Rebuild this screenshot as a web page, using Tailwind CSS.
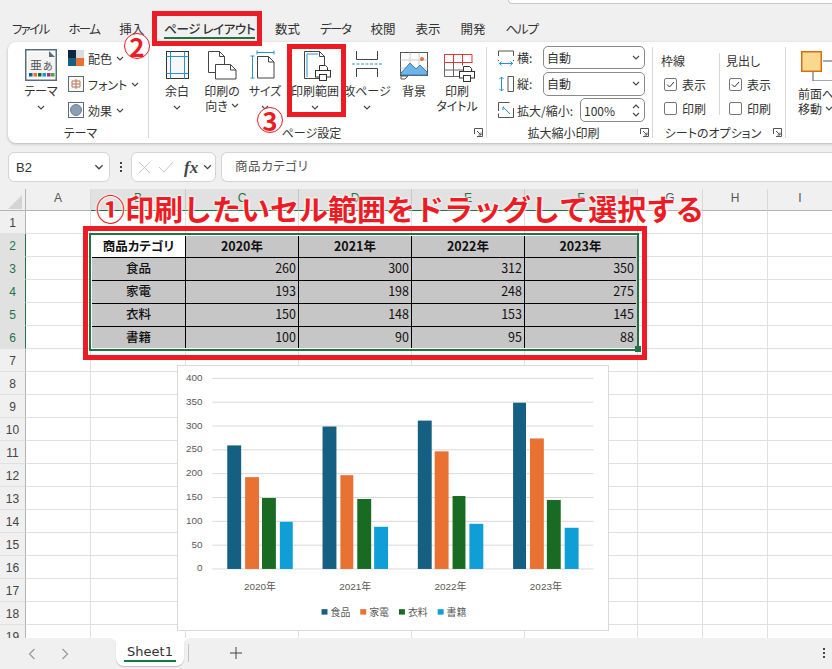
<!DOCTYPE html>
<html lang="ja">
<head>
<meta charset="UTF-8" />
<title>Excel 印刷範囲</title>
<script src="https://cdn.jsdelivr.net/npm/@tailwindcss/browser@4"></script>
</head>
<body class="bg-[#f0f0f0]">
<svg class="hidden">
  <symbol id="chev" viewBox="0 0 8 5"><path d="M1 1l3 3 3-3" fill="none" stroke="#444" stroke-width="1.1"/></symbol>
  <symbol id="launch" viewBox="0 0 9 9"><path d="M.5 6V.5H8.5V8.5H3M3 3l4 4M7 4.5V7H4.5" fill="none" stroke="#555"/></symbol>
  <symbol id="printer" viewBox="0 0 16 16"><path d="M4.5.5h6l2 2v4h-8z" fill="#fff" stroke="#333"/><rect x=".5" y="5.5" width="15" height="6.5" fill="#fff" stroke="#333"/><rect x="4.5" y="9.5" width="7" height="6" fill="#fff" stroke="#333"/></symbol>
</svg>

<div class="relative w-[832px] h-[669px] overflow-hidden flex flex-col bg-[#f0f0f0] text-[#333] text-[12px] leading-[15px] font-['Noto_Sans_CJK_JP','Liberation_Sans',sans-serif] [font-feature-settings:'palt']">

  <!-- title bar edge -->
  <div class="h-[4px] flex justify-end shrink-0"><div class="w-[324px] h-[4px] bg-white border-b border-l border-[#c8c8c8] rounded-bl"></div></div>

  <!-- tabs -->
  <div class="h-[38px] shrink-0 pt-[11px] pl-[12px] flex items-center gap-[20px] text-[12.5px]">
    <span class="tracking-[-1.7px]">ファイル</span>
    <span class="tracking-[-1.7px]">ホーム</span>
    <span>挿入</span>
    <span class="relative font-medium tracking-[-0.4px]">ページ レイアウト<span class="absolute left-0 right-0 top-[16px] h-[2px] bg-[#217346]"></span></span>
    <span>数式</span>
    <span class="tracking-[-1.5px]">データ</span>
    <span>校閲</span>
    <span>表示</span>
    <span>開発</span>
    <span class="tracking-[-1.2px]">ヘルプ</span>
  </div>

  <!-- ribbon -->
  <div class="h-[101px] shrink-0 ml-[8px] -mr-[10px] bg-white rounded-lg shadow-[0_1px_3px_rgba(0,0,0,0.25)] flex py-[5px]">

    <!-- theme group -->
    <div class="w-[141px] flex flex-col border-r border-[#d8d8d8]">
      <div class="flex-1 flex pl-[8px]">
        <div class="w-[50px] flex flex-col items-center pt-[2px]">
          <svg class="w-[32px] h-[32px]" viewBox="0 0 32 32">
            <rect x=".75" y=".75" width="30.5" height="30.5" fill="#fff" stroke="#5b6b7c" stroke-width="1.5"/>
            <path d="M3 3h22l5 5v21H3z" fill="#f4f4f4"/>
            <path d="M24 2l6 6h-6z" fill="#5b6b7c"/>
            <text x="5" y="21" font-size="12" fill="#555">亜</text>
            <text x="18" y="21" font-size="10" fill="#555">あ</text>
            <rect x="4" y="24" width="3.5" height="3.5" fill="#156082"/><rect x="8.5" y="24" width="3.5" height="3.5" fill="#e97132"/><rect x="13" y="24" width="3.5" height="3.5" fill="#196b24"/><rect x="17.5" y="24" width="3.5" height="3.5" fill="#0f9ed5"/><rect x="22" y="24" width="3.5" height="3.5" fill="#a02b93"/><rect x="26" y="24" width="3.5" height="3.5" fill="#4ea72e"/>
          </svg>
          <span class="mt-[2px]">テーマ</span>
          <svg class="w-[8px] h-[5px] mt-[7px]"><use href="#chev"/></svg>
        </div>
        <div class="ml-[2px] flex flex-col gap-[4px]">
          <div class="h-[22px] flex items-center gap-[4px]">
            <svg class="w-[16px] h-[16px]" viewBox="0 0 16 16"><rect width="8" height="8" fill="#0e2841"/><rect x="8" width="8" height="8" fill="#d9dde2"/><rect y="8" width="8" height="8" fill="#156082"/><rect x="8" y="8" width="8" height="8" fill="#e97132"/></svg>
            <span>配色</span><svg class="w-[8px] h-[5px]"><use href="#chev"/></svg>
          </div>
          <div class="h-[22px] flex items-center gap-[4px]">
            <svg class="w-[16px] h-[16px]" viewBox="0 0 16 16"><rect x=".5" y=".5" width="15" height="15" fill="#fdfaf6" stroke="#5b6b7c"/><path d="M4 5h8v6H4zM8 3v10M4 8h8" fill="none" stroke="#b5725a"/></svg>
            <span>フォント</span><svg class="w-[8px] h-[5px]"><use href="#chev"/></svg>
          </div>
          <div class="h-[22px] flex items-center gap-[4px]">
            <svg class="w-[16px] h-[16px]" viewBox="0 0 16 16"><rect x=".5" y=".5" width="15" height="15" fill="#fff" stroke="#5b6b7c"/><circle cx="8" cy="8" r="5.5" fill="#8a9fb3" stroke="#6d8196"/></svg>
            <span>効果</span><svg class="w-[8px] h-[5px]"><use href="#chev"/></svg>
          </div>
        </div>
      </div>
      <div class="h-[15px] -mb-[2px] pl-[5px] text-center">テーマ</div>
    </div>

    <!-- page setup group -->
    <div class="w-[338px] flex flex-col border-r border-[#d8d8d8]">
      <div class="flex-1 flex pl-[8px] pt-[2px] text-center">
        <div class="w-[40px] flex flex-col items-center">
          <svg class="w-[32px] h-[32px]" viewBox="0 0 32 32"><rect x="5.5" y="2.5" width="22" height="27" fill="#f7f7f7" stroke="#333"/><path d="M9.5 2.5v27M23.5 2.5v27M5.5 7.5h22M5.5 24.5h22" stroke="#2b8fd6" fill="none"/></svg>
          <span class="mt-[2px]">余白</span>
          <svg class="w-[8px] h-[5px] mt-[7px]"><use href="#chev"/></svg>
        </div>
        <div class="w-[50px] flex flex-col items-center">
          <svg class="w-[32px] h-[32px]" viewBox="0 0 32 32"><path d="M2.5 2.5h11l5 5v16h-16z" fill="#fff" stroke="#444"/><path d="M13.5 2.5v5h5" fill="none" stroke="#444"/><path d="M9.5 15.5h15l5.5 5.5v9H9.5z" fill="#fff" stroke="#444"/><path d="M24.5 15.5V21H30" fill="none" stroke="#444"/></svg>
          <span class="mt-[2px]">印刷の</span>
          <span class="flex items-center gap-[3px]">向き<svg class="w-[8px] h-[5px]"><use href="#chev"/></svg></span>
        </div>
        <div class="w-[36px] flex flex-col items-center">
          <svg class="w-[32px] h-[32px]" viewBox="0 0 32 32"><path d="M8.5 7.5h11l5.5 5.5v16H8.5z" fill="#fff" stroke="#444"/><path d="M19.5 7.5V13H25" fill="none" stroke="#444"/><path d="M8 3.5h17M8 1.5v4M25 1.5v4M3.5 7v22M1.5 7h4M1.5 29h4" fill="none" stroke="#2b8fd6"/></svg>
          <span class="mt-[2px]">サイズ</span>
          <svg class="w-[8px] h-[5px] mt-[7px]"><use href="#chev"/></svg>
        </div>
        <div class="w-[64px] flex flex-col items-center">
          <svg class="w-[32px] h-[32px] overflow-visible" viewBox="0 0 32 32"><path d="M5.5 2.5h15l5 5v22h-20z" fill="#fff" stroke="#444"/><path d="M20.5 2.5v5h5" fill="none" stroke="#444"/><path d="M8 28V5h11" fill="none" stroke="#2b8fd6"/><svg x="16" y="16" width="16" height="16"><use href="#printer"/></svg></svg>
          <span class="mt-[2px]">印刷範囲</span>
          <svg class="w-[8px] h-[5px] mt-[7px]"><use href="#chev"/></svg>
        </div>
        <div class="w-[40px] flex flex-col items-center">
          <svg class="w-[32px] h-[32px]" viewBox="0 0 32 32"><path d="M5.5 2v8.5h21V2M5.5 28v-8.5h21V28" fill="none" stroke="#444"/><path d="M1 15h30" stroke="#2b8fd6" stroke-dasharray="3 1.5"/></svg>
          <span class="mt-[2px] whitespace-nowrap">改ページ</span>
          <svg class="w-[8px] h-[5px] mt-[7px]"><use href="#chev"/></svg>
        </div>
        <div class="w-[54px] flex flex-col items-center">
          <svg class="w-[32px] h-[32px]" viewBox="0 0 32 32"><rect x="2.5" y="3.5" width="27" height="23" fill="#fff" stroke="#555"/><path d="M12 3.5v23M21 3.5v23M2.5 11h27M2.5 19h27" stroke="#ccc"/><path d="M3 24l9-10 6 6 4-4 7 7v3H3z" fill="#6fb4e6" stroke="#3a82bb"/><circle cx="24" cy="10" r="2" fill="#e97132"/><path d="M3 27h7l-3 3H3z" fill="#fff" stroke="#555"/></svg>
          <span class="mt-[2px]">背景</span>
        </div>
        <div class="w-[32px] flex flex-col items-center">
          <svg class="w-[32px] h-[32px] overflow-visible" viewBox="0 0 32 32"><path d="M3.5 13.5h28M3.5 21h28M3.5 5v22.5h15M12.5 13.5v14M21.5 13.5v3" fill="none" stroke="#666"/><path d="M3.5 5.5h27.5v8H3.5zM12.5 5.5v8M21.5 5.5v8" fill="#fff" stroke="#e8343b"/><svg x="18" y="17" width="16" height="16"><use href="#printer"/></svg></svg>
          <span class="mt-[2px]">印刷</span>
          <span class="whitespace-nowrap">タイトル</span>
        </div>
      </div>
      <div class="h-[15px] -mb-[2px] flex items-center"><span class="flex-1 text-center">ページ設定</span><svg class="w-[9px] h-[9px] mr-[3px]"><use href="#launch"/></svg></div>
    </div>

    <!-- scale group -->
    <div class="w-[166px] flex flex-col border-r border-[#d8d8d8]">
      <div class="flex-1 pl-[11px] -mt-[1px] flex flex-col gap-[3px]">
        <div class="h-[23px] flex items-center">
          <svg class="w-[16px] h-[16px] mr-[3px]" viewBox="0 0 16 16"><path d="M.5 6V1h15v5M.5 10v1M15.5 10v1" fill="none" stroke="#555"/><path d="M1 13.5h14M3.5 11.5l-2 2 2 2M12.5 11.5l2 2-2 2" fill="none" stroke="#2b8fd6"/></svg>
          <span class="w-[26px]">横:</span>
          <div class="w-[102px] h-[23px] border border-[#8a8a8a] rounded-[5px] pl-[3px] pr-[4px] flex items-center justify-between">自動<svg class="w-[8px] h-[5px]"><use href="#chev"/></svg></div>
        </div>
        <div class="h-[23px] flex items-center">
          <svg class="w-[16px] h-[16px] mr-[3px]" viewBox="0 0 16 16"><path d="M10 .5h5.5v15H10z" fill="none" stroke="#555"/><path d="M3.5 1v14M1.5 3l2-2 2 2M1.5 13l2 2 2-2" fill="none" stroke="#2b8fd6"/></svg>
          <span class="w-[26px]">縦:</span>
          <div class="w-[102px] h-[24px] border border-[#8a8a8a] rounded-[5px] pl-[3px] pr-[4px] flex items-center justify-between">自動<svg class="w-[8px] h-[5px]"><use href="#chev"/></svg></div>
        </div>
        <div class="h-[24px] flex items-center">
          <svg class="w-[16px] h-[16px] mr-[3px]" viewBox="0 0 16 16"><path d="M.5 9V.5h11M.5 11.5v4h15V6" fill="none" stroke="#555"/><path d="M6 5h-1v3M5 5l7 7" fill="none" stroke="#2b8fd6"/></svg>
          <span class="w-[63px] whitespace-nowrap">拡大/縮小:</span>
          <div class="w-[65px] h-[24px] border border-[#8a8a8a] rounded-[5px] pl-[3px] pr-[4px] flex items-center justify-between">100%<span class="flex flex-col gap-[3px]"><svg class="w-[8px] h-[5px] rotate-180"><use href="#chev"/></svg><svg class="w-[8px] h-[5px]"><use href="#chev"/></svg></span></div>
        </div>
      </div>
      <div class="h-[15px] -mb-[2px] flex items-center"><span class="flex-1 text-center">拡大縮小印刷</span><svg class="w-[9px] h-[9px] mr-[3px]"><use href="#launch"/></svg></div>
    </div>

    <!-- sheet options group -->
    <div class="w-[133px] flex flex-col border-r border-[#d8d8d8]">
      <div class="flex-1 flex pt-[1px]">
        <div class="w-[66px] pl-[8px]">
          <div class="h-[24px] flex items-center">枠線</div>
          <div class="h-[24px] flex items-center gap-[5px] pl-[3px]">
            <span class="w-[13px] h-[13px] border border-[#777] rounded-[2px] flex items-center justify-center"><svg class="w-[9px] h-[9px]" viewBox="0 0 9 9"><path d="M1 4.5l2.5 2.5L8 2" fill="none" stroke="#333"/></svg></span>表示
          </div>
          <div class="h-[24px] flex items-center gap-[5px] pl-[3px]"><span class="w-[13px] h-[13px] border border-[#777] rounded-[2px]"></span>印刷</div>
        </div>
        <div class="w-px h-[62px] mt-[5px] bg-[#d8d8d8]"></div>
        <div class="w-[65px] pl-[6px]">
          <div class="h-[24px] flex items-center">見出し</div>
          <div class="h-[24px] flex items-center gap-[5px] pl-[3px]">
            <span class="w-[13px] h-[13px] border border-[#777] rounded-[2px] flex items-center justify-center"><svg class="w-[9px] h-[9px]" viewBox="0 0 9 9"><path d="M1 4.5l2.5 2.5L8 2" fill="none" stroke="#333"/></svg></span>表示
          </div>
          <div class="h-[24px] flex items-center gap-[5px] pl-[3px]"><span class="w-[13px] h-[13px] border border-[#777] rounded-[2px]"></span>印刷</div>
        </div>
      </div>
      <div class="h-[15px] -mb-[2px] flex items-center"><span class="flex-1 text-center whitespace-nowrap">シートのオプション</span><svg class="w-[9px] h-[9px] mr-[3px]"><use href="#launch"/></svg></div>
    </div>

    <!-- arrange group -->
    <div class="pl-[12px] pt-[4px] flex flex-col">
      <svg class="w-[34px] h-[30px] ml-[3px]" viewBox="0 0 34 30"><path d="M22 10h11v20H12V20" fill="#fff" stroke="#555"/><rect x=".75" y=".75" width="19.5" height="19.5" fill="#f9d98f" stroke="#d9700f" stroke-width="1.5"/></svg>
      <span class="mt-[5px] whitespace-nowrap">前面へ</span>
      <span class="flex items-center gap-[3px]">移動<svg class="w-[8px] h-[5px]"><use href="#chev"/></svg></span>
    </div>
  </div>

  <!-- formula bar -->
  <div class="h-[30px] shrink-0 mt-[9px] flex pl-[8px]">
    <div class="w-[102px] bg-white border border-[#d4d4d4] rounded-md flex items-center justify-between pl-[7px] pr-[5px] text-[13px] font-['Liberation_Sans',sans-serif]">B2<svg class="w-[10px] h-[6px]"><use href="#chev"/></svg></div>
    <div class="w-[21px] flex flex-col items-center justify-center gap-[2px]"><span class="w-[2px] h-[2px] bg-[#444]"></span><span class="w-[2px] h-[2px] bg-[#444]"></span><span class="w-[2px] h-[2px] bg-[#444]"></span></div>
    <div class="w-[85px] bg-white border border-[#d4d4d4] rounded-md flex items-center pl-[6px] gap-[7px]">
      <svg class="w-[13px] h-[13px]" viewBox="0 0 13 13"><path d="M1 1l11 11M12 1L1 12" stroke="#c4c4c4" fill="none"/></svg>
      <svg class="w-[16px] h-[12px]" viewBox="0 0 16 12"><path d="M1 6l5 5L15 1" stroke="#c4c4c4" fill="none"/></svg>
      <span class="ml-[3px] font-['Liberation_Serif',serif] italic font-bold text-[17px] text-[#444] leading-none">fx</span>
      <svg class="w-[9px] h-[6px] -ml-[2px]"><use href="#chev"/></svg>
    </div>
    <div class="flex-1 ml-[5px] bg-white border-y border-l border-[#d4d4d4] rounded-l-md flex items-center pl-[13px] pb-[3px] text-[12.5px] text-[#555] tracking-[0.6px]">商品カテゴリ</div>
  </div>

  <!-- sheet -->
  <div class="flex-1 mt-[7px] min-h-0 overflow-hidden bg-white font-['Liberation_Sans','Noto_Sans_CJK_JP',sans-serif]">
    <div class="grid grid-cols-[26px_65px_95px_113px_113px_113px_113px_65px_65px_65px] grid-rows-[22px_repeat(19,23px)] [&>div]:border-r [&>div]:border-b [&>div]:border-[#e0e0e0]">
      <div class="bg-[#f0f0f0] border-[#b4b4b4]! relative overflow-hidden"><svg class="absolute left-[8px] top-[6px] w-[14px] h-[14px]" viewBox="0 0 14 14"><path d="M14 0v14H0z" fill="#d4d4d4"/></svg></div>
      <div class="bg-[#f0f0f0] border-b-[#b4b4b4]! border-r-[#d8d8d8]! flex items-center justify-center pb-[3px] text-[#555]">A</div>
      <div class="bg-[#e1e1e1] border-b-2 border-b-[#217346]! border-r-[#c8c8c8]! flex items-center justify-center pb-[3px] text-[#217346]">B</div>
      <div class="bg-[#e1e1e1] border-b-2 border-b-[#217346]! border-r-[#c8c8c8]! flex items-center justify-center pb-[3px] text-[#217346]">C</div>
      <div class="bg-[#e1e1e1] border-b-2 border-b-[#217346]! border-r-[#c8c8c8]! flex items-center justify-center pb-[3px] text-[#217346]">D</div>
      <div class="bg-[#e1e1e1] border-b-2 border-b-[#217346]! border-r-[#c8c8c8]! flex items-center justify-center pb-[3px] text-[#217346]">E</div>
      <div class="bg-[#e1e1e1] border-b-2 border-b-[#217346]! border-r-[#c8c8c8]! flex items-center justify-center pb-[3px] text-[#217346]">F</div>
      <div class="bg-[#f0f0f0] border-b-[#b4b4b4]! border-r-[#d8d8d8]! flex items-center justify-center pb-[3px] text-[#555]">G</div>
      <div class="bg-[#f0f0f0] border-b-[#b4b4b4]! border-r-[#d8d8d8]! flex items-center justify-center pb-[3px] text-[#555]">H</div>
      <div class="bg-[#f0f0f0] border-b-[#b4b4b4]! border-r-[#d8d8d8]! flex items-center justify-center pb-[3px] text-[#555]">I</div>

      <div class="bg-[#f0f0f0] border-r-[#b4b4b4]! flex items-center justify-center pt-[3px] text-[#444]">1</div>
      <div></div><div></div><div></div><div></div><div></div><div></div><div></div><div></div><div></div>

      <div class="bg-[#e1e1e1] border-r-2 border-r-[#217346]! flex items-center justify-center pt-[3px] text-[#217346]">2</div>
      <div></div>
      <!-- selected table B2:F6 -->
      <div class="col-span-5 row-span-5 relative bg-white border-0! font-['Noto_Sans_CJK_JP',sans-serif] text-[#111] text-[12.5px]">
        <div class="ml-[1px] mt-[2px] grid grid-cols-[94px_113px_113px_113px_111px] grid-rows-[22px_23px_23px_23px_21px] bg-[#c6c6c6] [&>div]:pb-[3px]">
          <div class="bg-white border-r border-b border-black flex items-center justify-center font-bold">商品カテゴリ</div>
          <div class="border-r border-b border-black flex items-center justify-center font-bold">2020年</div>
          <div class="border-r border-b border-black flex items-center justify-center font-bold">2021年</div>
          <div class="border-r border-b border-black flex items-center justify-center font-bold">2022年</div>
          <div class="border-b border-black flex items-center justify-center font-bold">2023年</div>
          <div class="border-r border-b border-black flex items-center justify-center font-medium">食品</div>
          <div class="border-r border-b border-black flex items-center justify-end pr-[2px]">260</div>
          <div class="border-r border-b border-black flex items-center justify-end pr-[2px]">300</div>
          <div class="border-r border-b border-black flex items-center justify-end pr-[2px]">312</div>
          <div class="border-b border-black flex items-center justify-end pr-[2px]">350</div>
          <div class="border-r border-b border-black flex items-center justify-center font-medium">家電</div>
          <div class="border-r border-b border-black flex items-center justify-end pr-[2px]">193</div>
          <div class="border-r border-b border-black flex items-center justify-end pr-[2px]">198</div>
          <div class="border-r border-b border-black flex items-center justify-end pr-[2px]">248</div>
          <div class="border-b border-black flex items-center justify-end pr-[2px]">275</div>
          <div class="border-r border-b border-black flex items-center justify-center font-medium">衣料</div>
          <div class="border-r border-b border-black flex items-center justify-end pr-[2px]">150</div>
          <div class="border-r border-b border-black flex items-center justify-end pr-[2px]">148</div>
          <div class="border-r border-b border-black flex items-center justify-end pr-[2px]">153</div>
          <div class="border-b border-black flex items-center justify-end pr-[2px]">145</div>
          <div class="border-r border-black flex items-center justify-center font-medium">書籍</div>
          <div class="border-r border-black flex items-center justify-end pr-[2px]">100</div>
          <div class="border-r border-black flex items-center justify-end pr-[2px]">90</div>
          <div class="border-r border-black flex items-center justify-end pr-[2px]">95</div>
          <div class="flex items-center justify-end pr-[2px]">88</div>
        </div>
        <div class="absolute -left-[2px] -top-[1px] w-[550px] h-[118px] border-2 border-[#217346] pointer-events-none"></div>
        <div class="absolute left-[544px] top-[112px] w-[6px] h-[6px] bg-[#217346]"></div>
      </div>
      <div></div><div></div><div></div>

      <div class="bg-[#e1e1e1] border-r-2 border-r-[#217346]! flex items-center justify-center pt-[3px] text-[#217346]">3</div>
      <div></div><div></div><div></div><div></div>
      <div class="bg-[#e1e1e1] border-r-2 border-r-[#217346]! flex items-center justify-center pt-[3px] text-[#217346]">4</div>
      <div></div><div></div><div></div><div></div>
      <div class="bg-[#e1e1e1] border-r-2 border-r-[#217346]! flex items-center justify-center pt-[3px] text-[#217346]">5</div>
      <div></div><div></div><div></div><div></div>
      <div class="bg-[#e1e1e1] border-r-2 border-r-[#217346]! flex items-center justify-center pt-[3px] text-[#217346]">6</div>
      <div></div><div></div><div></div><div></div>

      <div class="bg-[#f0f0f0] border-r-[#b4b4b4]! flex items-center justify-center pt-[3px] text-[#444]">7</div>
      <div></div><div></div><div></div><div></div><div></div><div></div><div></div><div></div><div></div>
      <div class="bg-[#f0f0f0] border-r-[#b4b4b4]! flex items-center justify-center pt-[3px] text-[#444]">8</div>
      <div></div><div></div><div></div><div></div><div></div><div></div><div></div><div></div><div></div>
      <div class="bg-[#f0f0f0] border-r-[#b4b4b4]! flex items-center justify-center pt-[3px] text-[#444]">9</div>
      <div></div><div></div><div></div><div></div><div></div><div></div><div></div><div></div><div></div>
      <div class="bg-[#f0f0f0] border-r-[#b4b4b4]! flex items-center justify-center pt-[3px] text-[#444]">10</div>
      <div></div><div></div><div></div><div></div><div></div><div></div><div></div><div></div><div></div>
      <div class="bg-[#f0f0f0] border-r-[#b4b4b4]! flex items-center justify-center pt-[3px] text-[#444]">11</div>
      <div></div><div></div><div></div><div></div><div></div><div></div><div></div><div></div><div></div>
      <div class="bg-[#f0f0f0] border-r-[#b4b4b4]! flex items-center justify-center pt-[3px] text-[#444]">12</div>
      <div></div><div></div><div></div><div></div><div></div><div></div><div></div><div></div><div></div>
      <div class="bg-[#f0f0f0] border-r-[#b4b4b4]! flex items-center justify-center pt-[3px] text-[#444]">13</div>
      <div></div><div></div><div></div><div></div><div></div><div></div><div></div><div></div><div></div>
      <div class="bg-[#f0f0f0] border-r-[#b4b4b4]! flex items-center justify-center pt-[3px] text-[#444]">14</div>
      <div></div><div></div><div></div><div></div><div></div><div></div><div></div><div></div><div></div>
      <div class="bg-[#f0f0f0] border-r-[#b4b4b4]! flex items-center justify-center pt-[3px] text-[#444]">15</div>
      <div></div><div></div><div></div><div></div><div></div><div></div><div></div><div></div><div></div>
      <div class="bg-[#f0f0f0] border-r-[#b4b4b4]! flex items-center justify-center pt-[3px] text-[#444]">16</div>
      <div></div><div></div><div></div><div></div><div></div><div></div><div></div><div></div><div></div>
      <div class="bg-[#f0f0f0] border-r-[#b4b4b4]! flex items-center justify-center pt-[3px] text-[#444]">17</div>
      <div></div><div></div><div></div><div></div><div></div><div></div><div></div><div></div><div></div>
      <div class="bg-[#f0f0f0] border-r-[#b4b4b4]! flex items-center justify-center pt-[3px] text-[#444]">18</div>
      <div></div><div></div><div></div><div></div><div></div><div></div><div></div><div></div><div></div>
      <div class="bg-[#f0f0f0] border-r-[#b4b4b4]! flex items-center justify-center pt-[3px] text-[#444]">19</div>
      <div></div><div></div><div></div><div></div><div></div><div></div><div></div><div></div><div></div>
    </div>
  </div>

  <!-- sheet tabs -->
  <div class="h-[31px] shrink-0 flex bg-white">
    <div class="w-[116px] bg-[#f0f0f0] rounded-tr-md flex items-center pl-[27px] gap-[22px]">
      <svg class="w-[10px] h-[12px]" viewBox="0 0 10 12"><path d="M7.5 1L2.5 6l5 5" fill="none" stroke="#999" stroke-width="1.2"/></svg>
      <svg class="w-[10px] h-[12px] ml-[1px]" viewBox="0 0 10 12"><path d="M2.5 1l5 5-5 5" fill="none" stroke="#999" stroke-width="1.2"/></svg>
    </div>
    <div class="w-[68px] bg-[#f0f0f0]">
      <div class="relative h-[28px] bg-white rounded-b-lg shadow-[0_1px_1px_rgba(0,0,0,0.2)] flex items-center justify-center pb-[2px] text-[#333] font-['DejaVu_Sans',sans-serif] text-[13px]">Sheet1<span class="absolute left-[8px] right-[8px] bottom-[4px] h-[2px] bg-[#107c41]"></span></div>
    </div>
    <div class="flex-1 bg-[#f0f0f0] rounded-tl-md flex items-center justify-between pr-[7px] pb-[1px]">
      <div class="flex items-center">
        <span class="w-px h-[18px] ml-[4px] bg-[#c4c4c4]"></span>
        <svg class="w-[12px] h-[12px] ml-[41px]" viewBox="0 0 12 12"><path d="M6 0v12M0 6h12" stroke="#444"/></svg>
      </div>
      <div class="flex flex-col gap-[2px]"><span class="w-[2px] h-[2px] bg-[#444]"></span><span class="w-[2px] h-[2px] bg-[#444]"></span><span class="w-[2px] h-[2px] bg-[#444]"></span></div>
    </div>
  </div>

  <!-- floating chart -->
  <svg class="absolute left-[177px] top-[365px] w-[432px] h-[266px] bg-white border border-[#d9d9d9]" viewBox="177 365 432 266" font-family="'Liberation Sans','Noto Sans CJK JP',sans-serif" font-size="10" fill="#595959">
    <g stroke="#d9d9d9">
      <path d="M211 377.5h384M211 401.5h384M211 425.5h384M211 449.5h384M211 473.5h384M211 497.5h384M211 521.5h384M211 545.5h384M211 569.5h384"/>
    </g>
    <g text-anchor="end">
      <text x="201" y="380">400</text><text x="201" y="404">350</text><text x="201" y="428">300</text><text x="201" y="452">250</text><text x="201" y="476">200</text><text x="201" y="500">150</text><text x="201" y="524">100</text><text x="201" y="548">50</text><text x="201" y="572">0</text>
    </g>
    <g fill="#156082"><rect x="226" y="445" width="14" height="124.5"/><rect x="322" y="426" width="14" height="143.5"/><rect x="418" y="420" width="14" height="149.5"/><rect x="514" y="402" width="13" height="167.5"/></g>
    <g fill="#e97132"><rect x="244" y="477" width="14" height="92.5"/><rect x="340" y="475" width="13" height="94.5"/><rect x="435" y="451" width="14" height="118.5"/><rect x="531" y="438" width="14" height="131.5"/></g>
    <g fill="#196b24"><rect x="261" y="498" width="14" height="71.5"/><rect x="357" y="499" width="14" height="70.5"/><rect x="453" y="496" width="13" height="73.5"/><rect x="548" y="500" width="14" height="69.5"/></g>
    <g fill="#0f9ed5"><rect x="279" y="522" width="13" height="47.5"/><rect x="374" y="527" width="14" height="42.5"/><rect x="470" y="524" width="14" height="45.5"/><rect x="566" y="528" width="14" height="41.5"/></g>
    <g text-anchor="middle">
      <text x="259" y="591">2020年</text><text x="355" y="591">2021年</text><text x="451" y="591">2022年</text><text x="547" y="591">2023年</text>
    </g>
    <rect x="321" y="610" width="6" height="5.5" fill="#156082"/><text x="330" y="617">食品</text>
    <rect x="360" y="610" width="6" height="5.5" fill="#e97132"/><text x="369" y="617">家電</text>
    <rect x="399" y="610" width="6" height="5.5" fill="#196b24"/><text x="408" y="617">衣料</text>
    <rect x="438" y="610" width="6" height="5.5" fill="#0f9ed5"/><text x="447" y="617">書籍</text>
  </svg>

  <!-- red annotations -->
  <div class="absolute left-[152px] top-[11px] w-[110px] h-[35px] border-[5px] border-[#ed1c24]"></div>
  <div class="absolute left-[287px] top-[44px] w-[59px] h-[73px] border-[5px] border-[#ed1c24]"></div>
  <div class="absolute left-[83px] top-[226px] w-[564px] h-[134px] border-[5px] border-[#ed1c24]"></div>
  <span class="absolute left-[124px] top-[33px] w-[26px] h-[26px] rounded-full bg-white/80 border border-[#ed1c24] flex items-center justify-center text-[26px] leading-none font-bold text-[#ed1c24]">2</span>
  <span class="absolute left-[257px] top-[107px] w-[26px] h-[26px] rounded-full bg-white/80 border border-[#ed1c24] flex items-center justify-center text-[26px] leading-none font-bold text-[#ed1c24]">3</span>
  <div class="absolute left-[96px] top-[188px] text-[29px] leading-[40px] font-bold text-[#ed1c24] whitespace-nowrap [font-feature-settings:normal] [text-shadow:0_0_2px_#fff,0_0_2px_#fff,0_0_3px_#fff]">①印刷したいセル範囲をドラッグして選択する</div>
</div>
</body>
</html>
